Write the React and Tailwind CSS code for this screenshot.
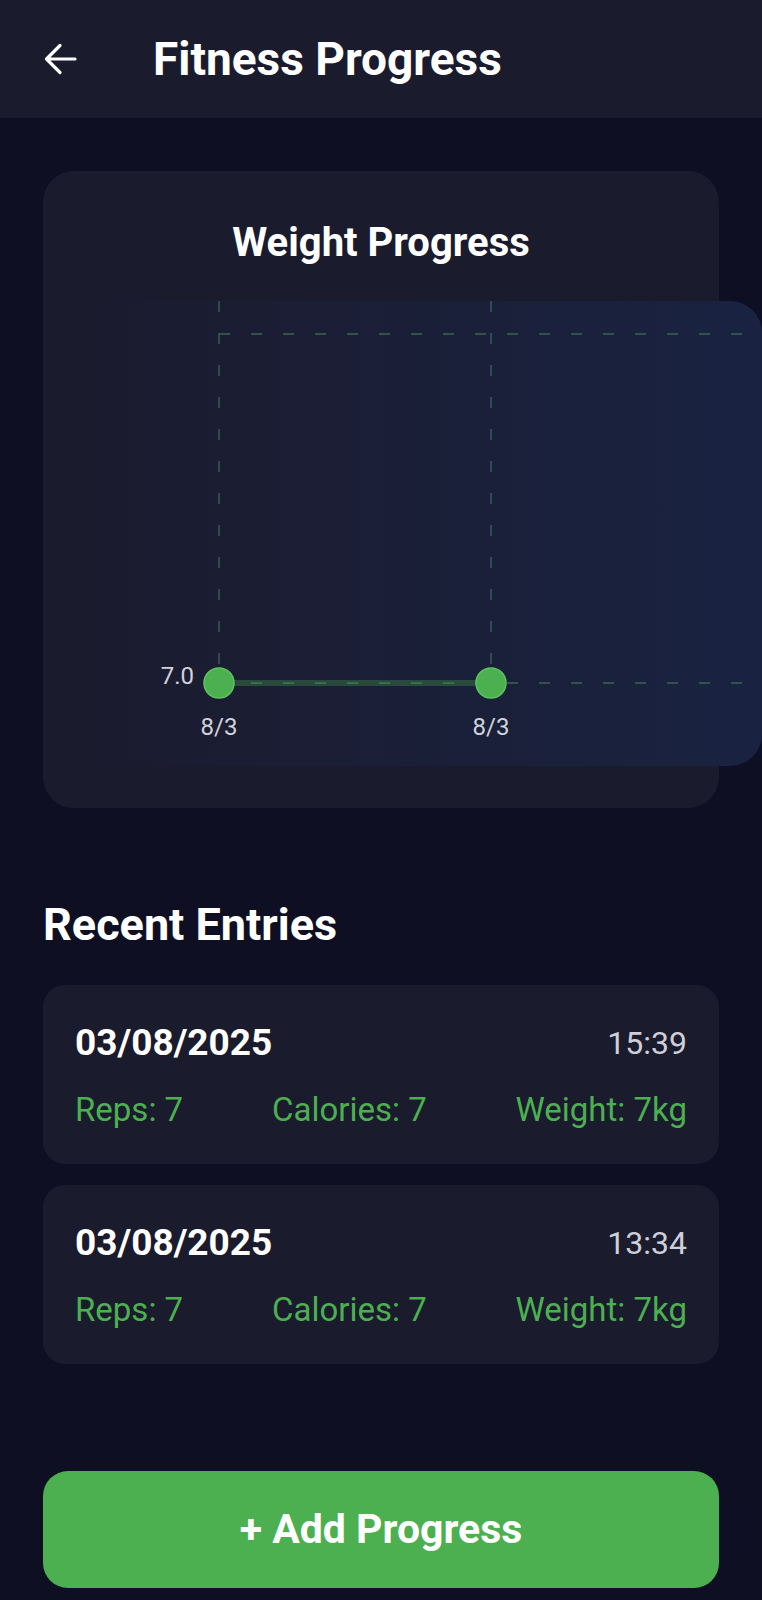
const entries = [
  { date: '03/08/2025', time: '15:39', reps: 7, calories: 7, weight: 7 },
  { date: '03/08/2025', time: '13:34', reps: 7, calories: 7, weight: 7 },
];

function WeightChart() {
  const grid = '#36504f';
  return (
    <div className="ml-[43px] mt-[34px] h-[465px] w-[676px] shrink-0 rounded-[32px] bg-linear-to-r from-[#1b1b2e] via-[#1a1f38] to-[#192341]">
      <svg width="676" height="465" viewBox="0 0 676 465">
        {/* grid */}
        <line x1="133" y1="0" x2="133" y2="368" stroke={grid} strokeWidth="1.8" strokeDasharray="11 21" />
        <line x1="405" y1="0" x2="405" y2="368" stroke={grid} strokeWidth="1.8" strokeDasharray="11 21" />
        <line x1="133" y1="33" x2="676" y2="33" stroke={grid} strokeWidth="1.8" strokeDasharray="11 21" />
        <line x1="133" y1="382" x2="676" y2="382" stroke={grid} strokeWidth="1.8" strokeDasharray="11 21" />
        {/* data line */}
        <line x1="133" y1="382" x2="405" y2="382" stroke="rgba(76,175,80,0.3)" strokeWidth="6" />
        <circle cx="133" cy="382" r="15" fill="#4caf50" stroke="#5cc45f" strokeWidth="1.5" />
        <circle cx="405" cy="382" r="15" fill="#4caf50" stroke="#5cc45f" strokeWidth="1.5" />
        {/* labels */}
        <text x="108" y="383" textAnchor="end" fill="#d2d3da" fontSize="24" fontFamily="Roboto, sans-serif">7.0</text>
        <text x="133" y="434" textAnchor="middle" fill="#d2d3da" fontSize="24" fontFamily="Roboto, sans-serif">8/3</text>
        <text x="405" y="434" textAnchor="middle" fill="#d2d3da" fontSize="24" fontFamily="Roboto, sans-serif">8/3</text>
      </svg>
    </div>
  );
}

function EntryCard({ entry, className = '' }) {
  return (
    <div className={`flex h-[179px] flex-col rounded-[22px] bg-[#1b1b2e] px-[32px] pt-[37px] ${className}`}>
      <div className="flex h-[42px] items-center justify-between">
        <span className="text-[37px] font-bold leading-[42px] text-white">{entry.date}</span>
        <span className="text-[32px] leading-[38px] text-[#cfcfd8]">{entry.time}</span>
      </div>
      <div className="mt-[27px] flex h-[38px] items-center justify-between text-[33px] leading-[38px] text-[#4caf50]">
        <span>Reps: {entry.reps}</span>
        <span>Calories: {entry.calories}</span>
        <span>Weight: {entry.weight}kg</span>
      </div>
    </div>
  );
}

export default function App() {
  return (
    <div className="h-[1600px] w-[762px] overflow-hidden bg-[#0e0f22] font-['Roboto',sans-serif] text-white">
      <header className="flex h-[118px] items-center bg-[#1b1b2e]">
        <svg className="ml-[43px] shrink-0" width="34" height="32" viewBox="0 0 34 32" fill="none">
          <path d="M17 2.5 L3.5 16 L17 29.5 M3.5 16 H32" stroke="white" strokeWidth="3.2" strokeLinecap="round" strokeLinejoin="round" />
        </svg>
        <h1 className="ml-[76px] text-[46px] font-bold leading-[54px]">Fitness Progress</h1>
      </header>

      <div className="mx-[43px] mt-[53px] flex h-[637px] flex-col rounded-[31px] bg-[#1b1b2e]">
        <h2 className="pt-[48px] text-center text-[40px] font-bold leading-[48px]">Weight Progress</h2>
        <WeightChart />
      </div>

      <div className="px-[43px]">
        <h2 className="mt-[91px] text-[45px] font-bold leading-[52px]">Recent Entries</h2>
        <EntryCard entry={entries[0]} className="mt-[34px]" />
        <EntryCard entry={entries[1]} className="mt-[21px]" />
        <button className="mt-[107px] flex h-[117px] w-full items-center justify-center rounded-[25px] bg-[#4caf50] text-[41px] font-bold text-white">
          + Add Progress
        </button>
      </div>
    </div>
  );
}
